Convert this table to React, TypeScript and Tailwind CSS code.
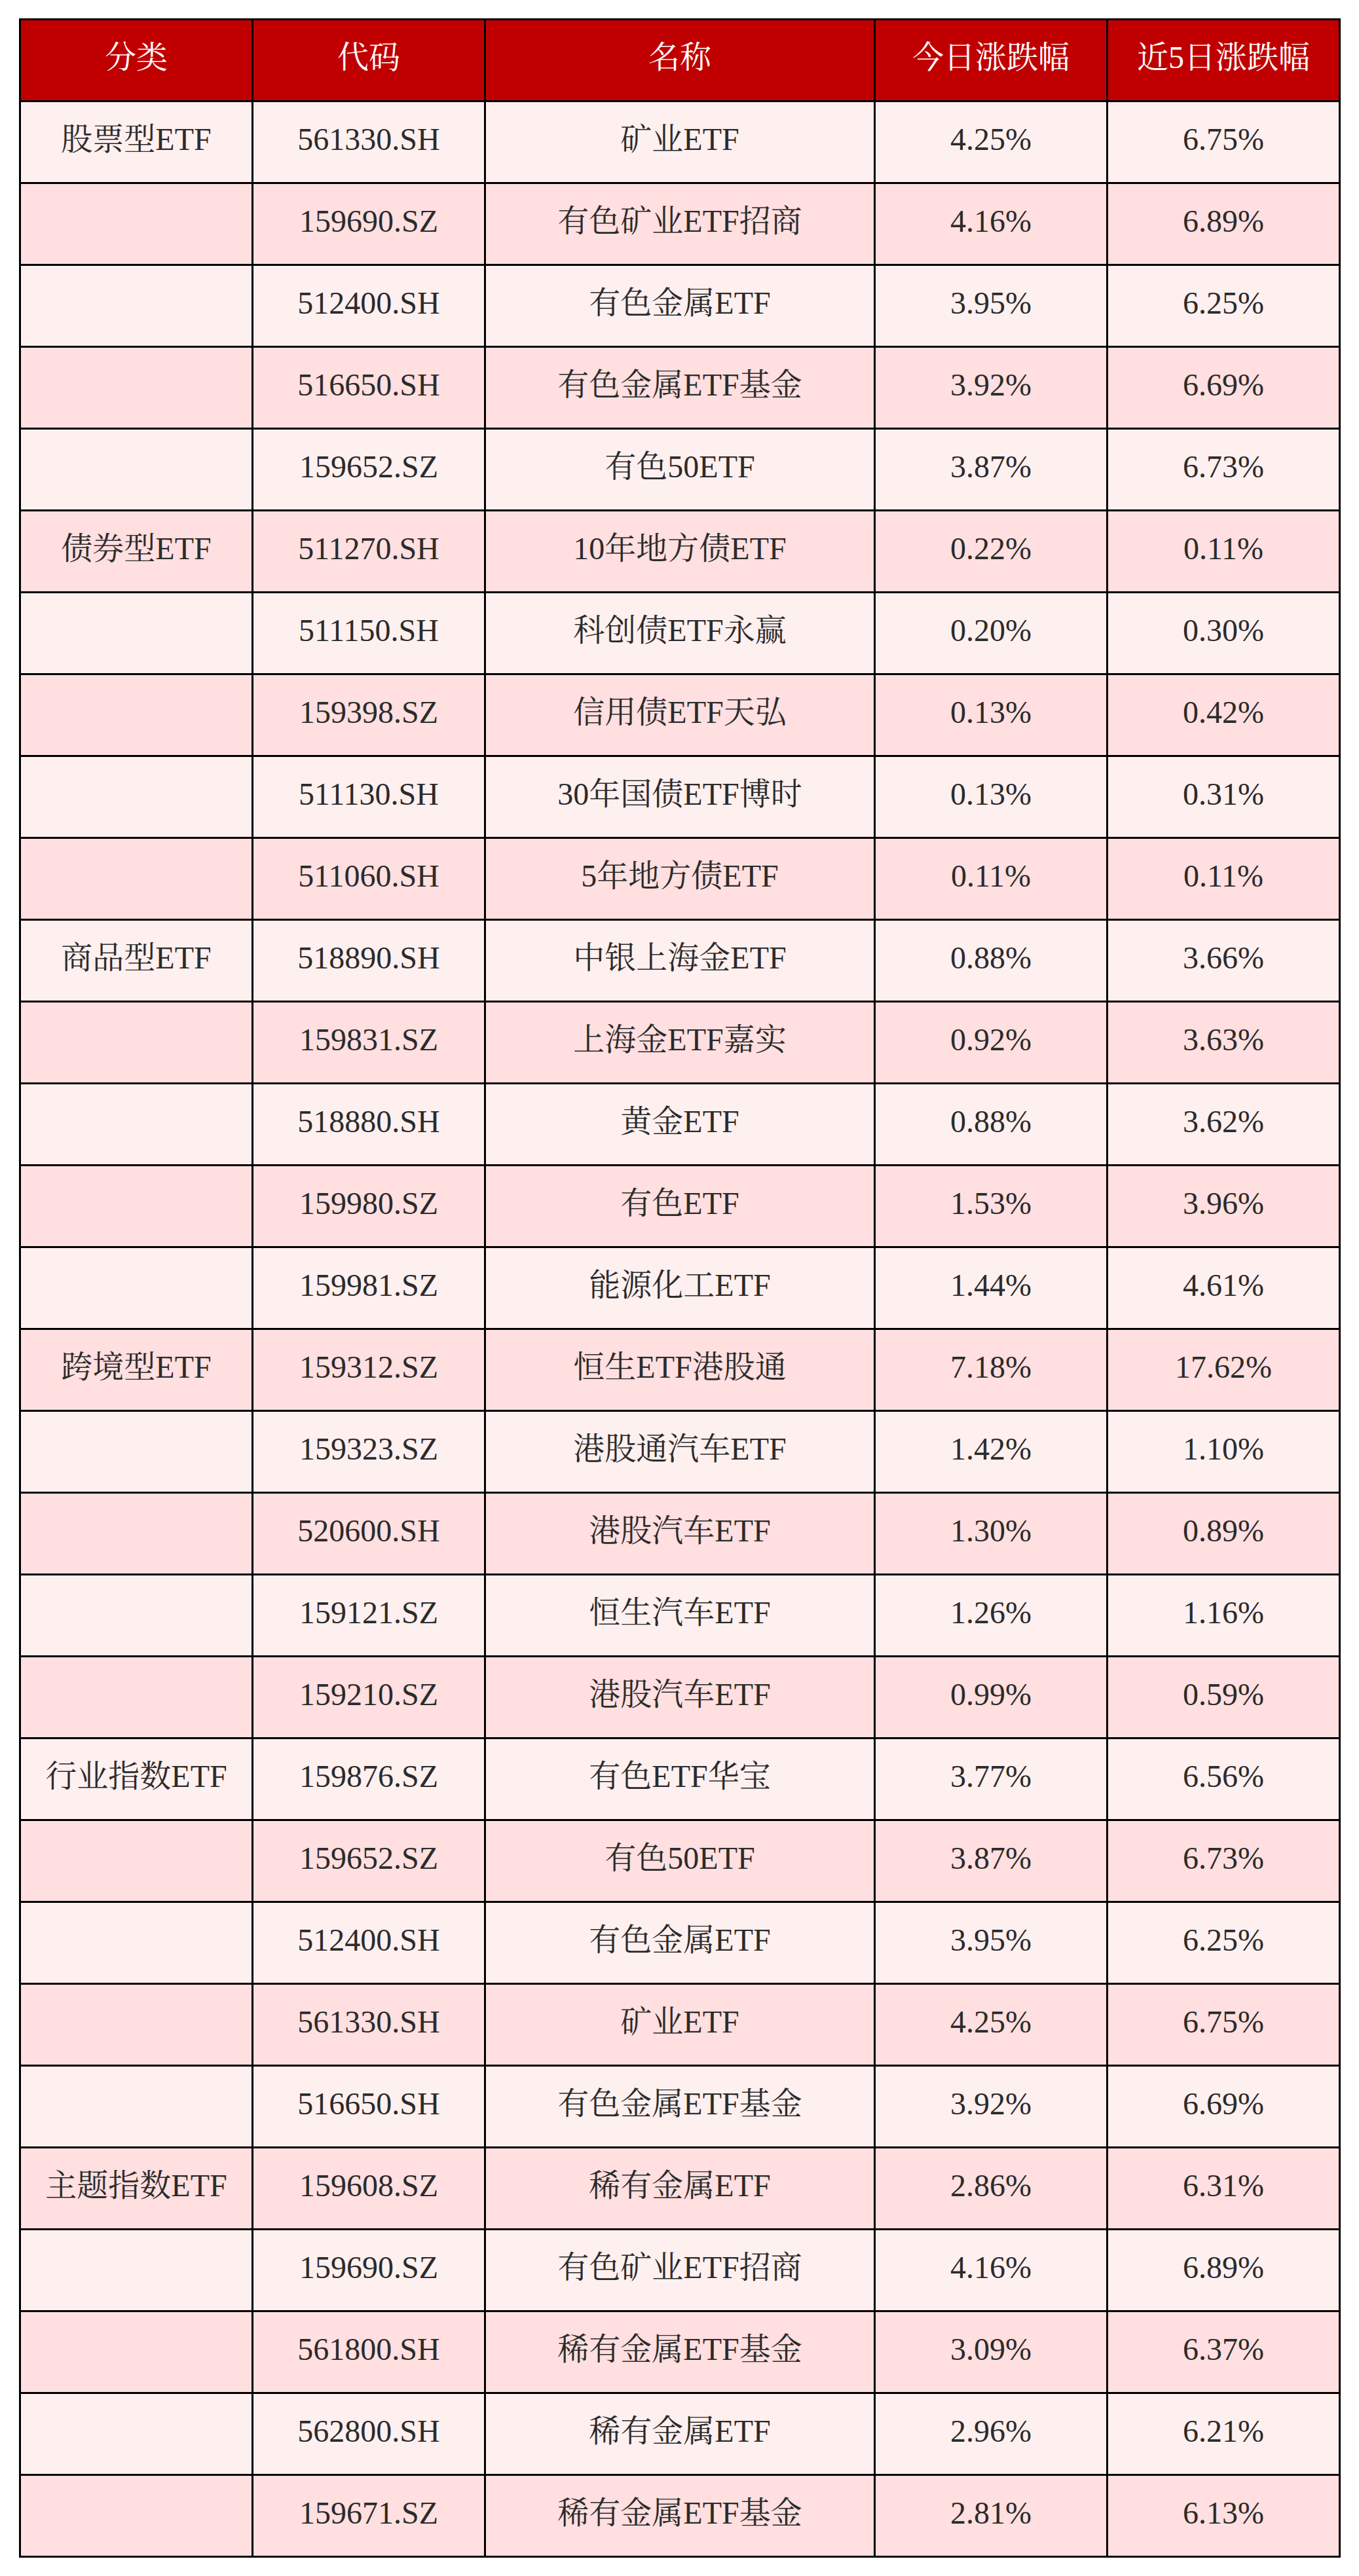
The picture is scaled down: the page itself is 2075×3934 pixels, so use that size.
import React from "react";

type Row = { cat: string; code: string; name: string; today: string; five: string };

const rows: Row[] = [
  { cat: "股票型ETF", code: "561330.SH", name: "矿业ETF", today: "4.25%", five: "6.75%" },
  { cat: "", code: "159690.SZ", name: "有色矿业ETF招商", today: "4.16%", five: "6.89%" },
  { cat: "", code: "512400.SH", name: "有色金属ETF", today: "3.95%", five: "6.25%" },
  { cat: "", code: "516650.SH", name: "有色金属ETF基金", today: "3.92%", five: "6.69%" },
  { cat: "", code: "159652.SZ", name: "有色50ETF", today: "3.87%", five: "6.73%" },
  { cat: "债券型ETF", code: "511270.SH", name: "10年地方债ETF", today: "0.22%", five: "0.11%" },
  { cat: "", code: "511150.SH", name: "科创债ETF永赢", today: "0.20%", five: "0.30%" },
  { cat: "", code: "159398.SZ", name: "信用债ETF天弘", today: "0.13%", five: "0.42%" },
  { cat: "", code: "511130.SH", name: "30年国债ETF博时", today: "0.13%", five: "0.31%" },
  { cat: "", code: "511060.SH", name: "5年地方债ETF", today: "0.11%", five: "0.11%" },
  { cat: "商品型ETF", code: "518890.SH", name: "中银上海金ETF", today: "0.88%", five: "3.66%" },
  { cat: "", code: "159831.SZ", name: "上海金ETF嘉实", today: "0.92%", five: "3.63%" },
  { cat: "", code: "518880.SH", name: "黄金ETF", today: "0.88%", five: "3.62%" },
  { cat: "", code: "159980.SZ", name: "有色ETF", today: "1.53%", five: "3.96%" },
  { cat: "", code: "159981.SZ", name: "能源化工ETF", today: "1.44%", five: "4.61%" },
  { cat: "跨境型ETF", code: "159312.SZ", name: "恒生ETF港股通", today: "7.18%", five: "17.62%" },
  { cat: "", code: "159323.SZ", name: "港股通汽车ETF", today: "1.42%", five: "1.10%" },
  { cat: "", code: "520600.SH", name: "港股汽车ETF", today: "1.30%", five: "0.89%" },
  { cat: "", code: "159121.SZ", name: "恒生汽车ETF", today: "1.26%", five: "1.16%" },
  { cat: "", code: "159210.SZ", name: "港股汽车ETF", today: "0.99%", five: "0.59%" },
  { cat: "行业指数ETF", code: "159876.SZ", name: "有色ETF华宝", today: "3.77%", five: "6.56%" },
  { cat: "", code: "159652.SZ", name: "有色50ETF", today: "3.87%", five: "6.73%" },
  { cat: "", code: "512400.SH", name: "有色金属ETF", today: "3.95%", five: "6.25%" },
  { cat: "", code: "561330.SH", name: "矿业ETF", today: "4.25%", five: "6.75%" },
  { cat: "", code: "516650.SH", name: "有色金属ETF基金", today: "3.92%", five: "6.69%" },
  { cat: "主题指数ETF", code: "159608.SZ", name: "稀有金属ETF", today: "2.86%", five: "6.31%" },
  { cat: "", code: "159690.SZ", name: "有色矿业ETF招商", today: "4.16%", five: "6.89%" },
  { cat: "", code: "561800.SH", name: "稀有金属ETF基金", today: "3.09%", five: "6.37%" },
  { cat: "", code: "562800.SH", name: "稀有金属ETF", today: "2.96%", five: "6.21%" },
  { cat: "", code: "159671.SZ", name: "稀有金属ETF基金", today: "2.81%", five: "6.13%" },
];

const headers = ["分类", "代码", "名称", "今日涨跌幅", "近5日涨跌幅"];

const font =
  "font-['Liberation_Serif','Noto_Serif_CJK_SC','Noto_Sans_CJK_SC',serif]";

const cell = "border-[3px] border-black text-center align-middle p-0 pb-[8px]";

export default function App() {
  return (
    <div className="w-[2075px] h-[3934px] bg-white pt-[28px] pl-[29px]">
      <table
        className={`table-fixed border-collapse border-[3px] border-black w-[2018px] ${font} text-[48px] leading-none`}
      >
        <colgroup>
          <col className="w-[355px]" />
          <col className="w-[355px]" />
          <col className="w-[595px]" />
          <col className="w-[355px]" />
          <col className="w-[355px]" />
        </colgroup>
        <thead>
          <tr className="h-[125px] bg-[#c00000]">
            {headers.map((h) => (
              <th key={h} className={`${cell} text-white font-normal`}>
                {h}
              </th>
            ))}
          </tr>
        </thead>
        <tbody>
          {rows.map((r, i) => (
            <tr
              key={i}
              className={`h-[125px] ${i % 2 === 0 ? "bg-[#fff0f0]" : "bg-[#ffdfe0]"} text-[#2b2b2b]`}
            >
              <td className={cell}>{r.cat}</td>
              <td className={cell}>{r.code}</td>
              <td className={cell}>{r.name}</td>
              <td className={cell}>{r.today}</td>
              <td className={cell}>{r.five}</td>
            </tr>
          ))}
        </tbody>
      </table>
    </div>
  );
}
